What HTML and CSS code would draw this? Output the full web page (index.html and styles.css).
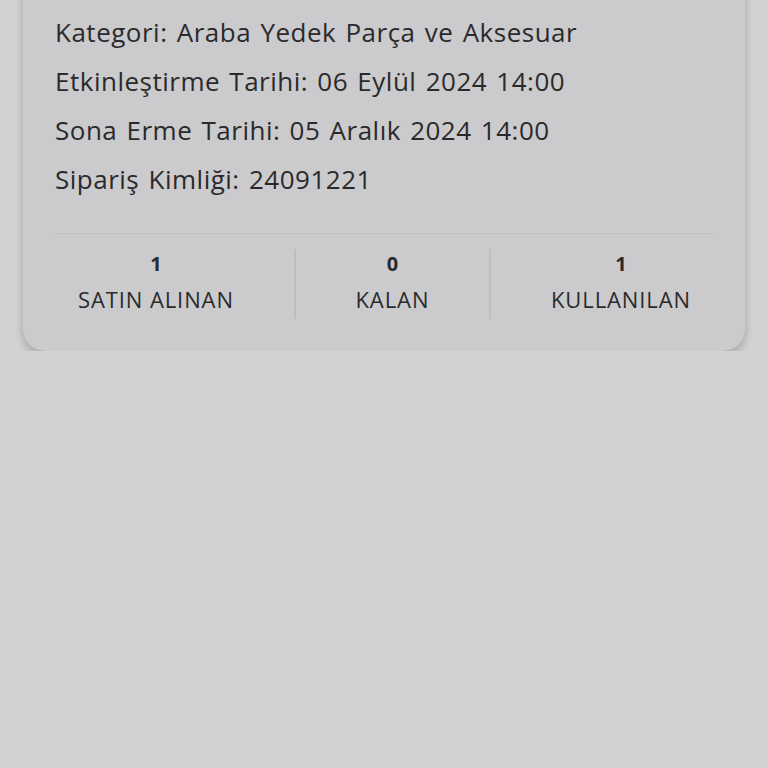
FILE: index.html
```html
<!DOCTYPE html>
<html lang="tr">
<head>
    <meta charset="UTF-8">
    <meta name="viewport" content="width=device-width, initial-scale=1.0">
    <title>Kupon Detayı</title>
    <link rel="stylesheet" href="styles.css">
</head>
<body>
    <div class="card">
        <div class="info">
            <p>Kategori: Araba Yedek Parça ve Aksesuar</p>
            <p>Etkinleştirme Tarihi: 06 Eylül 2024 14:00</p>
            <p>Sona Erme Tarihi: 05 Aralık 2024 14:00</p>
            <p>Sipariş Kimliği: 24091221</p>
        </div>
        <div class="stats">
            <div class="stat">
                <span class="num">1</span>
                <span class="label">SATIN ALINAN</span>
            </div>
            <div class="sep"></div>
            <div class="stat">
                <span class="num">0</span>
                <span class="label">KALAN</span>
            </div>
            <div class="sep"></div>
            <div class="stat">
                <span class="num">1</span>
                <span class="label">KULLANILAN</span>
            </div>
        </div>
    </div>
</body>
</html>
```

FILE: styles.css
```css
body {
    margin: 0;
    background: #d2d2d2;
    font-family: "Open Sans", "Noto Sans", sans-serif;
    color: #2a2a2b;
}
.card {
    margin: -22px 23px 0 23px;
    background: #cbcbcd;
    border-radius: 0 0 22px 22px;
    box-shadow: 0 4px 10px rgba(0, 0, 0, 0.22);
    padding: 0 31px 32px 32px;
}
.info {
    padding-top: 30px;
    padding-bottom: 29px;
    border-bottom: 1px solid #bfbfc1;
}
.info p {
    margin: 0;
    font-size: 26px;
    line-height: 49px;
    letter-spacing: 0.5px;
    word-spacing: 2px;
}
.stats {
    display: flex;
    justify-content: space-between;
    align-items: center;
    padding: 15px 23px 0 23px;
}
.stat {
    display: flex;
    flex-direction: column;
    align-items: center;
}
.num {
    font-size: 20px;
    font-weight: bold;
    line-height: 30px;
}
.label {
    font-size: 22px;
    line-height: 40px;
    letter-spacing: 0.9px;
}
.sep {
    width: 2px;
    height: 70px;
    background: #bdbdbf;
}
```
